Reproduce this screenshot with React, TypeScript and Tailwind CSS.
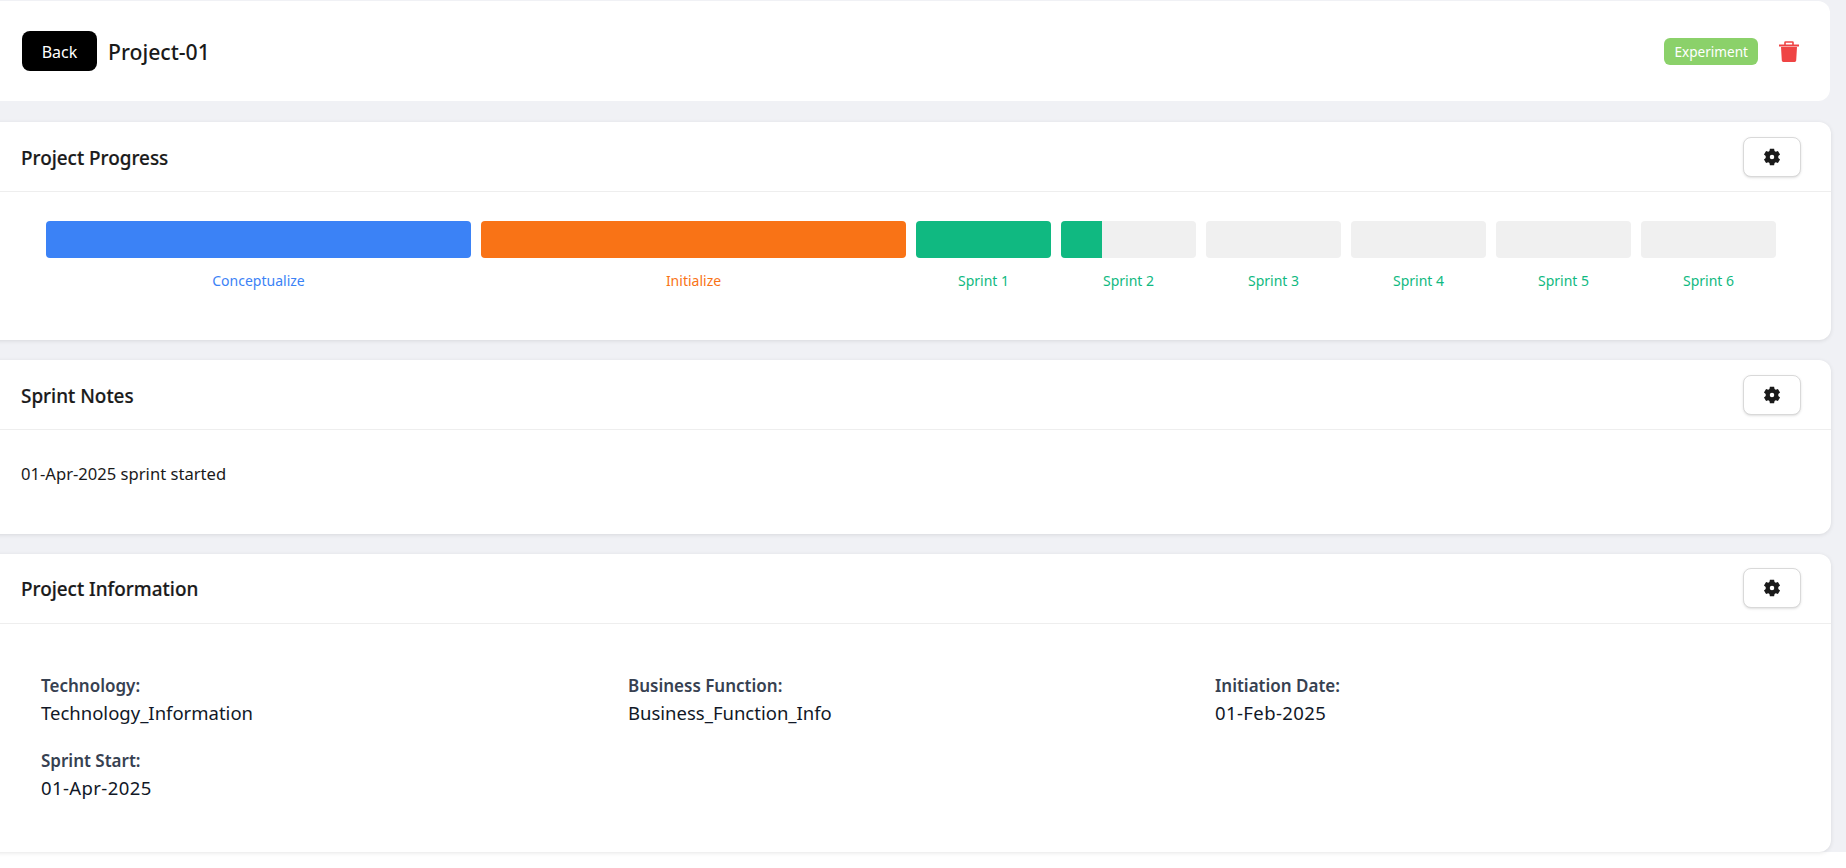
const phases = [
  { label: "Conceptualize", fill: 100, bar: "bg-[#3b82f6]", text: "text-[#3b82f6]", grow: "w-[425px]" },
  { label: "Initialize", fill: 100, bar: "bg-[#f97316]", text: "text-[#f97316]", grow: "w-[425px]" },
  { label: "Sprint 1", fill: 100, bar: "bg-[#10b981]", text: "text-[#10b981]", grow: "w-[135px]" },
  { label: "Sprint 2", fill: 30, bar: "bg-[#10b981]", text: "text-[#10b981]", grow: "w-[135px]" },
  { label: "Sprint 3", fill: 0, bar: "bg-[#10b981]", text: "text-[#10b981]", grow: "w-[135px]" },
  { label: "Sprint 4", fill: 0, bar: "bg-[#10b981]", text: "text-[#10b981]", grow: "w-[135px]" },
  { label: "Sprint 5", fill: 0, bar: "bg-[#10b981]", text: "text-[#10b981]", grow: "w-[135px]" },
  { label: "Sprint 6", fill: 0, bar: "bg-[#10b981]", text: "text-[#10b981]", grow: "w-[135px]" },
];

const info = [
  { label: "Technology:", value: "Technology_Information", valueClass: "" },
  { label: "Business Function:", value: "Business_Function_Info", valueClass: "" },
  { label: "Initiation Date:", value: "01-Feb-2025", valueClass: "tracking-[0.4px]" },
  { label: "Sprint Start:", value: "01-Apr-2025", valueClass: "tracking-[0.4px]" },
];

function GearIcon() {
  return (
    <svg viewBox="0 0 24 24" className="w-[18px] h-[18px] fill-[#1a1a1a]">
      <path
        fillRule="evenodd"
        d="M9.2 1h5.6l.6 3 1.6.9 2.9-1 2.8 4.9-2.3 2v2.4l2.3 2-2.8 4.9-2.9-1-1.6.9-.6 3H9.2l-.6-3-1.6-.9-2.9 1-2.8-4.9 2.3-2v-2.4l-2.3-2 2.8-4.9 2.9 1 1.6-.9zM12 9a3 3 0 1 0 0 6 3 3 0 0 0 0-6z"
      />
    </svg>
  );
}

function TrashIcon() {
  return (
    <svg viewBox="0 0 20 21" className="w-[20px] h-[21px]">
      <path d="M6 4V1.5A.5.5 0 0 1 6.5 1h7a.5.5 0 0 1 .5.5V4" fill="none" stroke="#ef4444" strokeWidth="1.6" />
      <path d="M0 3.5h20v2H0z" fill="#ef4444" />
      <path d="M2 6h16l-.8 13.6A1.5 1.5 0 0 1 15.7 21H4.3a1.5 1.5 0 0 1-1.5-1.4z" fill="#ef4444" />
    </svg>
  );
}

function SectionHeader({ title, className = "" }: { title: string; className?: string }) {
  return (
    <div className={`flex items-center justify-between h-[70px] pl-[41px] pr-[30px] border-b border-[#eeeeee] ${className}`}>
      <h2 className="text-[18.9px] font-medium text-[#1a1a1a] [-webkit-text-stroke:0.2px_#1a1a1a] translate-y-[2px]">{title}</h2>
      <button className="flex items-center justify-center w-[58px] h-[40px] bg-white border border-[#d9d9d9] rounded-lg shadow-sm">
        <GearIcon />
      </button>
    </div>
  );
}

export default function App() {
  return (
    <div className="min-h-[868px] bg-[linear-gradient(#f0f1f5_852px,white_852px)] font-['Noto_Sans',sans-serif] overflow-hidden">
      <div className="flex flex-col w-[1850px] -ml-[20px] pt-[1px]">
        <div className="flex items-center justify-between h-[100px] w-[1850px] pl-[42px] pr-[31px] bg-white rounded-xl">
          <div className="flex items-center gap-[11px]">
            <button className="w-[75px] h-[40px] bg-black text-white text-[16px] leading-[42px] rounded-lg">Back</button>
            <span className="text-[21.2px] font-medium text-[#1a1a1a] translate-y-[1px]">Project-01</span>
          </div>
          <div className="flex items-center gap-[21px]">
            <span className="px-[10px] h-[27px] pt-[2px] flex items-center bg-[#8bd16a] text-white text-[13.6px] rounded-md">Experiment</span>
            <TrashIcon />
          </div>
        </div>

        <div className="mt-[21px] w-[1851px] bg-white rounded-xl shadow-[0_1px_4px_rgba(0,0,0,0.1)]">
          <SectionHeader title="Project Progress" />
          <div className="flex gap-[10px] pl-[66px] pt-[29px] h-[148px]">
            {phases.map((p) => (
              <div key={p.label} className={`flex flex-col items-center shrink-0 ${p.grow}`}>
                <div className="w-full h-[37px] bg-[#f0f0f0] rounded overflow-hidden">
                  <div className={`h-full ${p.bar}`} style={{ width: `${p.fill}%` }} />
                </div>
                <span className={`mt-[12px] text-[14px] ${p.text}`}>{p.label}</span>
              </div>
            ))}
          </div>
        </div>

        <div className="mt-[20px] w-[1851px] bg-white rounded-xl shadow-[0_1px_4px_rgba(0,0,0,0.1)]">
          <SectionHeader title="Sprint Notes" />
          <p className="h-[104px] pl-[41px] pt-[32px] text-[16.6px] text-[#1a1a1a]">01-Apr-2025 sprint started</p>
        </div>

        <div className="mt-[20px] w-[1851px] bg-white rounded-xl shadow-[0_1px_4px_rgba(0,0,0,0.1)]">
          <SectionHeader title="Project Information" className="pb-[2px]" />
          <div className="grid grid-cols-[587px_587px_1fr] gap-y-[22px] h-[228px] pl-[61px] pt-[50px] content-start">
            {info.map((i) => (
              <div key={i.label}>
                <div className="text-[17px] font-semibold text-[#374151] leading-[24px]">{i.label}</div>
                <div className={`text-[18.5px] text-[#111827] leading-[29px] ${i.valueClass}`}>{i.value}</div>
              </div>
            ))}
          </div>
        </div>
      </div>
    </div>
  );
}
